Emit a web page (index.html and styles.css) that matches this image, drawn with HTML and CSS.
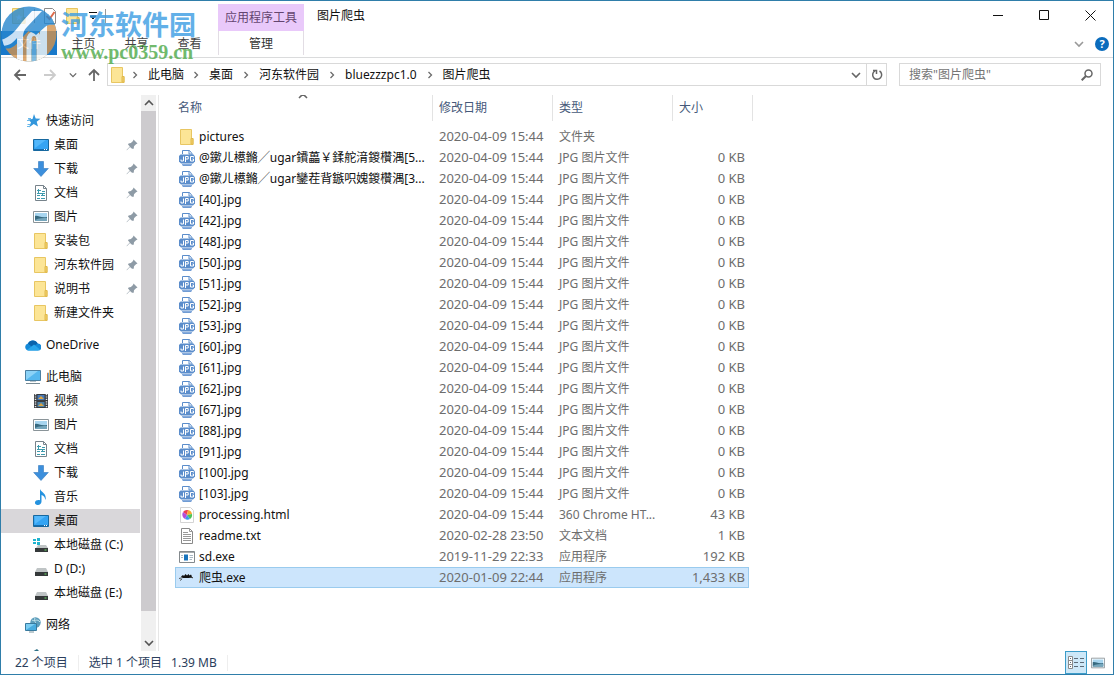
FILE: index.html
```html
<!DOCTYPE html>
<html lang="zh-CN">
<head>
<meta charset="utf-8">
<title>图片爬虫</title>
<link rel="stylesheet" href="styles.css">
</head>
<body>
<svg class="defs" aria-hidden="true">
  <symbol id="folder" viewBox="0 0 16 16"><path d="M1.500 .5h11v9h1.500v6h-12.500z" fill="#fce596" stroke="#e8c662"/><path d="M12 15V9.500h2v6z" fill="#f3d06a" stroke="#e0b94c"/></symbol>
  <symbol id="star" viewBox="0 0 16 16"><path d="M9 1l1.700 4.500 4.800.2-3.800 3 1.300 4.800L8.700 11 4 14.500l2-5.300-3-2.700 4.500-.6z" fill="#3296dc"/><path d="M2 7.500h3M3 5.500h3M2.500 11.500h3M2 13.500h3" stroke="#69b8ea"/></symbol>
  <symbol id="desktop" viewBox="0 0 16 16"><path d="M.5 2.500h15v11H.5z" fill="#35a4f3" stroke="#17689f"/><path d="M2 11l11-8H1.500z" fill="#54b8fb"/><path d="M1 12.500h14" stroke="#176bab"/><path d="M11 12.500h1M13 12.500h1" stroke="#fff"/></symbol>
  <symbol id="down" viewBox="0 0 16 16"><path d="M5.500.5h5v7h4.800L8 15.500.7 7.500h4.800z" fill="#3c8fdc" stroke="#3279bd" stroke-width=".6"/></symbol>
  <symbol id="doc" viewBox="0 0 16 16"><path d="M2.500.5h8l3 3v12h-11z" fill="#fff" stroke="#77838b"/><path d="M10.500.5v3h3" fill="none" stroke="#77838b"/><path d="M4 5.500h4M9 6.500h3M4 8.500h8M4 10.500h3M8 10.500h4M4 13.500h3M8 13.500h4M5.500 4v5M9.500 8v3" stroke="#3e9aad"/></symbol>
  <symbol id="photo" viewBox="0 0 16 16"><path d="M.5 2.500h15v11H.5z" fill="#fff" stroke="#8a9499"/><path d="M2 4h12v8H2z" fill="#a7d5ef"/><path d="M2 7c3-1 5 2 12 1v4H2z" fill="#376a80"/><path d="M2 11c4-2 8-2 12-2v3H2z" fill="#75a6bc"/></symbol>
  <symbol id="cloud" viewBox="0 0 16 16"><path d="M3.500 13.500a3.500 3.500 0 01-.6-6.900A5.500 5.500 0 0112.700 6.500a3.500 3.500 0 01.3 7z" fill="#1489d8"/><path d="M3 6.500a5.500 5.500 0 019.700 0L7 10z" fill="#0963ac"/><path d="M2 13l7-5.500 6 5-2 1H3.500z" fill="#28a6eb"/></symbol>
  <symbol id="pc" viewBox="0 0 16 16"><path d="M.5 1.500h15v10H.5z" fill="#55b7ee" stroke="#4a7fa1"/><path d="M1 11L13 2H1z" fill="#8bd2f7"/><path d="M1 14.500h14" stroke="#768993"/><path d="M5 12.500h6" stroke="#b9c5cb"/></symbol>
  <symbol id="film" viewBox="0 0 16 16"><path d="M1 1h14v14H1z" fill="#393c40"/><path d="M2.500 1v14M13.500 1v14" stroke="#e4e4e4" stroke-width="1.500" stroke-dasharray="1.200 1.200"/><path d="M4.500 2h7v5h-7z" fill="#4678b8"/><path d="M4.500 9h7v5h-7z" fill="#4f83a9"/><path d="M5 6l3-3 3 3zM5 13l3-3 3 3z" fill="#dba544"/></symbol>
  <symbol id="music" viewBox="0 0 16 16"><path d="M7 0c1 3.500 7 4 5.500 11-1-4-2.500-4.500-4-5V12.500c0 4.500-7 4.500-6.500 1 .3-2.300 3-2.800 5-2.200z" fill="#2492df"/></symbol>
  <symbol id="disk" viewBox="0 0 16 16"><path d="M4 7h9l2 4H2z" fill="#bfc4c5"/><path d="M2 11h13v4H2z" fill="#35393a"/><path d="M11.500 13h2" stroke="#6be267"/></symbol>
  <symbol id="cdisk" viewBox="0 0 16 16"><path d="M5 8h8l2 3H3z" fill="#bfc4c5"/><path d="M2 11h13v4H2z" fill="#35393a"/><path d="M11.500 13h2" stroke="#6be267"/><path d="M0 2h3v2H0zM4 1h3v3H4zM0 5h3v2H0zM4 5h3v3H4z" fill="#20b4cf"/></symbol>
  <symbol id="net" viewBox="0 0 16 16"><circle cx="10.500" cy="5.500" r="5.200" fill="#5c9dbb"/><path d="M7 3c2 2 5-2 8 2M10 1c-2 4 3 5 1 9" stroke="#c6e6ed" fill="none"/><path d="M.5 6.500h11v7H.5z" fill="#48acdf" stroke="#387a9e"/><path d="M1 13l9-6H1z" fill="#7bcdf2"/><path d="M4 15h5" stroke="#7a959f"/></symbol>
  <symbol id="panel" viewBox="0 0 16 16"><path d="M12 0l3 3v6H7V3z" fill="#2f7186"/></symbol>
  <symbol id="pin" viewBox="0 0 12 12"><path d="M7.500.5l4 4-1.500.7-2 2-.3 2.500L6 9.800 4 7.900.8 11.200l-.3-.3L3.800 7.500 2 5.600l.6-1.200 2.300-.3L7 2z" fill="#8e9ba6"/></symbol>
  <symbol id="jpg" viewBox="0 0 16 16"><path d="M3.500 4V.5h7l2.500 3V6" fill="#fff" stroke="#5b8dcb"/><path d="M10 .5v3.500h3M4 15.500h8" fill="none" stroke="#5b8dcb"/><path d="M1.500 4.500h13l1.500 2v5l-2 2H2l-2-2V6z" fill="#5b8dcb"/><path d="M3 14h10v1.500H3z" fill="#86abdc"/><path d="M4.500 6.500V11H2V9.500M6.500 12V6.500h2.700V9H6.500M14.500 7.500V6.500h-3V11h3V9h-1" fill="none" stroke="#fff"/></symbol>
  <symbol id="html" viewBox="0 0 16 16"><path d="M1.500.5h10l3 3v12h-13z" fill="#fff" stroke="#d4d4d4"/><path d="M8 8L4 5a5 5 0 015-2z" fill="#ed3d53"/><path d="M8 8L9 3a5 5 0 014 4z" fill="#f9a631"/><path d="M8 8l5-1a5 5 0 01-2 5z" fill="#4dc455"/><path d="M8 8l3 4a5 5 0 01-5 0z" fill="#3c9aeb"/><path d="M8 8l-2 4a5 5 0 01-2-7z" fill="#b24cd9"/></symbol>
  <symbol id="txt" viewBox="0 0 16 16"><path d="M2.500.5h8l3 3v12h-11z" fill="#fff" stroke="#898989"/><path d="M10.500.5v3h3M4 4.500h5M4 6.500h8M4 8.500h8M4 10.500h8M4 12.500h8" fill="none" stroke="#989898"/></symbol>
  <symbol id="exe" viewBox="0 0 16 16"><path d="M.5 2.500h15v11H.5z" fill="#fff" stroke="#83898d"/><path d="M1 3.500h14" stroke="#a6aaac"/><path d="M5 5.500h4v6H5z" fill="#1874bd"/><path d="M10.500 6.500H14M10.500 8.500H14M10.500 10.500H13M2 6.500h2M2 8.500h2" stroke="#a9b8c3"/></symbol>
  <symbol id="bug" viewBox="0 0 16 16"><path d="M2 6.500l2-1.500 1 1 1.500-2L8 5.500 9.500 4l1 1.500 1.500-1 1 2-2 1.500H4z" fill="#111"/><path d="M0 8.500l4-1M3 9l-2 1.500M10 7.500h4M12 7l1.500 1" stroke="#333" stroke-width=".8"/></symbol>
  <symbol id="chev" viewBox="0 0 10 10"><path d="M1 3l4 4 4-4" fill="none" stroke="currentColor" stroke-width="1.600"/></symbol>
  <symbol id="sep" viewBox="0 0 10 10"><path d="M3.500 2l3 3-3 3" fill="none" stroke="#6b6b6b" stroke-width="1.300"/></symbol>
  <symbol id="arrow" viewBox="0 0 14 14"><path d="M13 7H2M7 2L2 7l5 5" fill="none" stroke="currentColor" stroke-width="1.800"/></symbol>
</svg>

<div class="window">
  <header class="top">
    <div class="left-head">
      <div class="quick">
        <svg viewBox="0 0 16 16"><use href="#folder"/><path d="M8 6l1 2.500h2.500l-2 1.500.8 2.500L8 11l-2.300 1.500.8-2.500-2-1.500H7z" fill="#fff"/></svg>
        <i></i>
        <svg viewBox="0 0 16 16"><path d="M2.500.5h8l3 3v12h-11z" fill="#fff" stroke="#8a8a8a"/><path d="M4.500 8l3 3 5-7" fill="none" stroke="#dd6b4b" stroke-width="2"/></svg>
        <svg><use href="#folder"/></svg>
        <svg class="mini" viewBox="0 0 10 10"><path d="M1 1.500h8M2 5h6L5 8z" fill="#111" stroke="#111"/></svg>
        <i></i>
      </div>
      <nav class="tabs"><button class="file">文件</button><button>主页</button><button>共享</button><button>查看</button></nav>
    </div>
    <div class="context"><span>应用程序工具</span><button>管理</button></div>
    <h1 class="title">图片爬虫</h1>
    <div class="right-head">
      <div class="caption">
        <button aria-label="最小化"><svg viewBox="0 0 11 11"><path d="M0 5.500h10"/></svg></button>
        <button aria-label="最大化"><svg viewBox="0 0 11 11"><path d="M.5.5h9v9h-9z"/></svg></button>
        <button aria-label="关闭"><svg viewBox="0 0 11 11"><path d="M.5.5l10 10M10.500.5l-10 10"/></svg></button>
      </div>
      <div class="help"><button aria-label="展开功能区"><svg class="s10"><use href="#chev"/></svg></button><button class="q" aria-label="帮助">?</button></div>
    </div>
  </header>

  <div class="watermark"><svg viewBox="0 0 58 62"><defs><clipPath id="disc"><circle cx="28" cy="33" r="27.500"/></clipPath></defs><g clip-path="url(#disc)"><path d="M0 0h58v62H0z" fill="#2686ce"/><path d="M0 46c8 4 14 0 20-8l14-15c8-5 14-2 24-7v46H0z" fill="#d4934d"/><path d="M0 39c10-3 15-10 21-18l10-11h10L26 26c-3 3-4 6-4 12v24h-6V37C11 43 7 45 0 45z" fill="#f5faff"/><path d="M28 62V39c0-8 10-9 10 0v23" stroke="#f9f8f2" stroke-width="5" fill="none"/><path d="M33 62V40" stroke="#66add9" stroke-width="5"/><path d="M39 19h7v43h-7z" fill="#f8faf8"/><path d="M27 30l14-15c4-3 9-2 14-3v12c-5 0-7-1-11 2l-9 8c-3-3-6-3-8-4z" fill="#2387d0"/></g></svg><p><b>河东软件园</b><span>www.pc0359.cn</span></p></div>

  <div class="nav">
    <button aria-label="后退"><svg class="s14"><use href="#arrow"/></svg></button>
    <button class="faint fwd" aria-label="前进"><svg class="s14"><use href="#arrow"/></svg></button>
    <button class="hist" aria-label="最近位置"><svg class="s8"><use href="#chev"/></svg></button>
    <button class="up" aria-label="上移"><svg class="s14"><use href="#arrow"/></svg></button>
    <div class="address">
      <svg class="s16"><use href="#folder"/></svg>
      <svg class="s10"><use href="#sep"/></svg><a href="#">此电脑</a>
      <svg class="s10"><use href="#sep"/></svg><a href="#">桌面</a>
      <svg class="s10"><use href="#sep"/></svg><a href="#">河东软件园</a>
      <svg class="s10"><use href="#sep"/></svg><a href="#">bluezzzpc1.0</a>
      <svg class="s10"><use href="#sep"/></svg><a href="#">图片爬虫</a>
      <button class="drop" aria-label="历史"><svg class="s10"><use href="#chev"/></svg></button>
      <button class="refresh" aria-label="刷新"><svg class="s12" viewBox="0 0 12 12"><path d="M8.500 2A4.500 4.500 0 114 1.900" fill="none" stroke="#666" stroke-width="1.500"/><path d="M2 1.500h3.500V5" fill="none" stroke="#666" stroke-width="1.500"/></svg></button>
    </div>
    <label class="search"><input type="text" placeholder='搜索"图片爬虫"' aria-label="搜索"><svg class="s12" viewBox="0 0 12 12"><circle cx="7.500" cy="4.500" r="3.500" fill="none" stroke="#666" stroke-width="1.500"/><path d="M5 7L.7 11.300" stroke="#666" stroke-width="2"/></svg></label>
  </div>

  <main class="body">
    <aside class="side">
      <ul>
        <li class="root"><svg><use href="#star"/></svg>快速访问</li>
        <li><svg><use href="#desktop"/></svg>桌面<svg class="pin"><use href="#pin"/></svg></li>
        <li><svg><use href="#down"/></svg>下载<svg class="pin"><use href="#pin"/></svg></li>
        <li><svg><use href="#doc"/></svg>文档<svg class="pin"><use href="#pin"/></svg></li>
        <li><svg><use href="#photo"/></svg>图片<svg class="pin"><use href="#pin"/></svg></li>
        <li><svg><use href="#folder"/></svg>安装包<svg class="pin"><use href="#pin"/></svg></li>
        <li><svg><use href="#folder"/></svg>河东软件园<svg class="pin"><use href="#pin"/></svg></li>
        <li><svg><use href="#folder"/></svg>说明书<svg class="pin"><use href="#pin"/></svg></li>
        <li><svg><use href="#folder"/></svg>新建文件夹</li>
      </ul>
      <ul><li class="root"><svg><use href="#cloud"/></svg>OneDrive</li></ul>
      <ul>
        <li class="root"><svg><use href="#pc"/></svg>此电脑</li>
        <li><svg><use href="#film"/></svg>视频</li>
        <li><svg><use href="#photo"/></svg>图片</li>
        <li><svg><use href="#doc"/></svg>文档</li>
        <li><svg><use href="#down"/></svg>下载</li>
        <li><svg><use href="#music"/></svg>音乐</li>
        <li class="current"><svg><use href="#desktop"/></svg>桌面</li>
        <li><svg><use href="#cdisk"/></svg>本地磁盘 (C:)</li>
        <li><svg><use href="#disk"/></svg>D (D:)</li>
        <li><svg><use href="#disk"/></svg>本地磁盘 (E:)</li>
      </ul>
      <ul><li class="root"><svg><use href="#net"/></svg>网络</li></ul>
      <ul><li class="root"><svg><use href="#panel"/></svg></li></ul>
    </aside>
    <div class="scroll">
      <button class="flip" aria-label="向上滚动"><svg class="s10"><use href="#chev"/></svg></button>
      <div class="thumb"></div><div class="track"></div>
      <button aria-label="向下滚动"><svg class="s10"><use href="#chev"/></svg></button>
    </div>
    <section class="files">
      <svg class="sort s10 flip"><use href="#chev"/></svg>
      <table>
        <colgroup><col class="c1"><col class="c2"><col class="c2"><col class="c4"></colgroup>
        <thead><tr><th><span>名称</span></th><th><span>修改日期</span></th><th><span>类型</span></th><th><span>大小</span></th></tr></thead>
        <tbody>
        <tr><td><div><svg><use href="#folder"/></svg>pictures</div></td><td>2020-04-09 15:44</td><td>文件夹</td><td></td></tr>
        <tr><td><div><svg><use href="#jpg"/></svg>@鏉ㄦ櫒鏅╱ugar鐨藟￥鍒舵湇鍐欑湡[5...</div></td><td>2020-04-09 15:44</td><td>JPG 图片文件</td><td>0 KB</td></tr>
        <tr><td><div><svg><use href="#jpg"/></svg>@鏉ㄦ櫒鏅╱ugar鑾茬背鏃呮媿鍐欑湡[3...</div></td><td>2020-04-09 15:44</td><td>JPG 图片文件</td><td>0 KB</td></tr>
        <tr><td><div><svg><use href="#jpg"/></svg>[40].jpg</div></td><td>2020-04-09 15:44</td><td>JPG 图片文件</td><td>0 KB</td></tr>
        <tr><td><div><svg><use href="#jpg"/></svg>[42].jpg</div></td><td>2020-04-09 15:44</td><td>JPG 图片文件</td><td>0 KB</td></tr>
        <tr><td><div><svg><use href="#jpg"/></svg>[48].jpg</div></td><td>2020-04-09 15:44</td><td>JPG 图片文件</td><td>0 KB</td></tr>
        <tr><td><div><svg><use href="#jpg"/></svg>[50].jpg</div></td><td>2020-04-09 15:44</td><td>JPG 图片文件</td><td>0 KB</td></tr>
        <tr><td><div><svg><use href="#jpg"/></svg>[51].jpg</div></td><td>2020-04-09 15:44</td><td>JPG 图片文件</td><td>0 KB</td></tr>
        <tr><td><div><svg><use href="#jpg"/></svg>[52].jpg</div></td><td>2020-04-09 15:44</td><td>JPG 图片文件</td><td>0 KB</td></tr>
        <tr><td><div><svg><use href="#jpg"/></svg>[53].jpg</div></td><td>2020-04-09 15:44</td><td>JPG 图片文件</td><td>0 KB</td></tr>
        <tr><td><div><svg><use href="#jpg"/></svg>[60].jpg</div></td><td>2020-04-09 15:44</td><td>JPG 图片文件</td><td>0 KB</td></tr>
        <tr><td><div><svg><use href="#jpg"/></svg>[61].jpg</div></td><td>2020-04-09 15:44</td><td>JPG 图片文件</td><td>0 KB</td></tr>
        <tr><td><div><svg><use href="#jpg"/></svg>[62].jpg</div></td><td>2020-04-09 15:44</td><td>JPG 图片文件</td><td>0 KB</td></tr>
        <tr><td><div><svg><use href="#jpg"/></svg>[67].jpg</div></td><td>2020-04-09 15:44</td><td>JPG 图片文件</td><td>0 KB</td></tr>
        <tr><td><div><svg><use href="#jpg"/></svg>[88].jpg</div></td><td>2020-04-09 15:44</td><td>JPG 图片文件</td><td>0 KB</td></tr>
        <tr><td><div><svg><use href="#jpg"/></svg>[91].jpg</div></td><td>2020-04-09 15:44</td><td>JPG 图片文件</td><td>0 KB</td></tr>
        <tr><td><div><svg><use href="#jpg"/></svg>[100].jpg</div></td><td>2020-04-09 15:44</td><td>JPG 图片文件</td><td>0 KB</td></tr>
        <tr><td><div><svg><use href="#jpg"/></svg>[103].jpg</div></td><td>2020-04-09 15:44</td><td>JPG 图片文件</td><td>0 KB</td></tr>
        <tr><td><div><svg><use href="#html"/></svg>processing.html</div></td><td>2020-04-09 15:44</td><td>360 Chrome HT...</td><td>43 KB</td></tr>
        <tr><td><div><svg><use href="#txt"/></svg>readme.txt</div></td><td>2020-02-28 23:50</td><td>文本文档</td><td>1 KB</td></tr>
        <tr><td><div><svg><use href="#exe"/></svg>sd.exe</div></td><td>2019-11-29 22:33</td><td>应用程序</td><td>192 KB</td></tr>
        <tr class="selected"><td><div><svg><use href="#bug"/></svg>爬虫.exe</div></td><td>2020-01-09 22:44</td><td>应用程序</td><td>1,433 KB</td></tr>
        </tbody>
      </table>
    </section>
  </main>

  <footer class="status">
    <span>22 个项目</span><span>选中 1 个项目&ensp; 1.39 MB</span>
    <div class="views">
      <button class="on" aria-label="详细信息"><svg viewBox="0 0 16 14"><path d="M.5.5h4v12h-4zM.5 4.500h4M.5 8.500h4" fill="#fff" stroke="#8b8b8b"/><path d="M2 2.500h1M2 6.500h1M2 10.500h1M6 2.500h4M12 2.500h4M6 6.500h4M12 6.500h4M6 10.500h4M12 10.500h4" stroke="#5d6b78"/></svg></button>
      <button aria-label="大图标"><svg><use href="#photo"/></svg></button>
    </div>
  </footer>
</div>
</body>
</html>
```

FILE: styles.css
```css
* { box-sizing: border-box; }
body { margin: 0; background: #fff; color: #111; font: 12px/16px "Noto Sans", "Noto Sans CJK SC", sans-serif; }
button { border: 0; padding: 0; background: none; font: inherit; color: inherit; display: flex; align-items: center; justify-content: center; }
a { color: inherit; text-decoration: none; }
ul { list-style: none; margin: 0; padding: 0; }
svg { width: 16px; height: 16px; flex: none; display: block; }
.defs { position: absolute; width: 0; height: 0; }
.s8 { width: 8px; height: 8px; }
.s10 { width: 10px; height: 10px; }
.s12 { width: 12px; height: 12px; }
.s14 { width: 14px; height: 14px; }
.flip svg, svg.flip { transform: rotate(180deg); }

.window { position: relative; min-height: 100vh; display: flex; flex-direction: column; border: 1px solid #2f7eaa; }

.top { display: flex; height: 57px; border-bottom: 1px solid #dadbdc; }
.left-head { width: 217px; display: flex; flex-direction: column; }
.quick { height: 30px; display: flex; align-items: center; gap: 7px; padding-left: 10px; }
.quick i { width: 1px; height: 14px; background: #999; }
.quick .mini { width: 10px; height: 10px; }
.tabs { display: flex; height: 24px; }
.tabs button { width: 53px; padding-top: 1px; color: #444; }
.tabs .file { width: 56px; background: #1979ca; color: #fff; }
.context { width: 86px; padding-top: 3px; text-align: center; color: #63456f; }
.context span { display: block; line-height: 27px; background: #e9c9fa; }
.context button { width: 100%; height: 24px; padding-top: 1px; color: #333; border: solid #e2dde4; border-width: 0 1px; }
.title { margin: 0 0 0 13px; font-size: 12px; font-weight: 400; line-height: 30px; }
.right-head { margin-left: auto; }
.caption { display: flex; height: 28px; }
.caption button { width: 46px; }
.caption button:first-child { width: 45px; }
.caption svg { width: 11px; height: 11px; fill: none; stroke: #111; }
.help { display: flex; justify-content: flex-end; align-items: center; gap: 11px; height: 30px; padding-right: 4px; color: #999; }
.help .q { width: 14px; height: 14px; border-radius: 50%; background: #0b6cbd; color: #fff; font-weight: 700; font-size: 11px; }

.watermark { position: absolute; left: 0; top: 0; display: flex; opacity: .8; pointer-events: none; }
.watermark svg { width: 58px; height: 62px; }
.watermark p { margin: 8px 0 0 2px; }
.watermark b, .watermark span { display: block; }
.watermark b { font-size: 27px; line-height: 32px; color: #3c9de3; }
.watermark span { font: bold 20px/22px "Liberation Serif", serif; color: #4eaa49; }

.nav { display: flex; height: 37px; padding: 5px 12px 9px 12px; color: #666; }
.nav > button { width: 14px; }
.nav .fwd { margin-left: 16px; }
.nav .fwd svg { transform: scaleX(-1); }
.nav .faint { color: #ccc; }
.nav .hist { width: 8px; margin-left: 12px; }
.nav .up { margin-left: 10px; }
.nav .up svg { transform: rotate(90deg); }
.address { flex: 1; min-width: 0; margin: 0 12px 0 6px; display: flex; align-items: center; border: 1px solid #d9d9d9; padding-left: 2px; color: #111; }
.address .s16 + .s10 { margin-left: 4px; }
.address a { margin: 0 8px; white-space: nowrap; }
.address a:first-of-type { margin-right: 7px; }
.drop { width: 20px; margin-left: auto; color: #666; }
.refresh { width: 20px; align-self: stretch; border-left: 1px solid #d9d9d9; }
.search { width: 202px; display: flex; align-items: center; border: 1px solid #d9d9d9; padding: 0 7px 0 9px; }
.search input { flex: 1; min-width: 0; border: 0; padding: 0; outline: 0; font: inherit; background: none; }
.search input::placeholder { color: #757575; opacity: 1; }

.body { flex: 1 1 0; min-height: 0; display: flex; overflow: hidden; }
.side { width: 140px; padding-top: 14px; overflow: hidden; }
.side ul { margin-bottom: 8px; }
.side li { height: 24px; margin-right: 1px; display: flex; align-items: center; gap: 5px; padding: 0 2px 0 32px; white-space: nowrap; }
.side .root { padding-left: 24px; }
.side .pin { width: 12px; height: 12px; margin: 0 0 0 auto; }
.side .current { background: #d9d7da; }
.scroll { width: 18px; border-right: 1px solid #e6e6e6; padding-right: 2px; display: flex; flex-direction: column; }
.scroll button { height: 16px; background: #f0f0f0; color: #555; }
.thumb { flex: 1; background: #cdcbce; }
.track { height: 24px; background: #f0f0f0; }

.files { flex: 1; position: relative; padding-left: 16px; }
.sort { position: absolute; left: 139px; top: -4px; color: #666; }
table { table-layout: fixed; width: 574px; border-collapse: separate; border-spacing: 0; }
.c1 { width: 258px; }
.c2 { width: 120px; }
th { padding: 0 0 5px; font-weight: 400; text-align: left; color: #46597a; }
th span { display: flex; align-items: center; height: 26px; padding-left: 6px; border-right: 1px solid #e3e3e3; }
th:first-child span { padding-left: 3px; }
th:last-child span { width: 80px; }
td { height: 21px; padding: 0 0 0 6px; border: 1px solid transparent; border-width: 1px 0; line-height: 17px; color: #6d6d6d; white-space: nowrap; }
td:first-child { border-left-width: 1px; padding-left: 3px; color: #111; }
td:last-child { border-right-width: 1px; padding-right: 3px; text-align: right; font-size: 13px; }
td:nth-child(2) { font-size: 13px; }
td div { display: flex; align-items: center; gap: 4px; overflow: hidden; }
.selected td { background: #cce5fc; border-color: #9acbee; }

.status { height: 23px; display: flex; align-items: center; color: #2b3e5c; }
.status > span { padding: 0 10px 0 14px; border-right: 1px solid #eee; }
.status > span + span { padding: 0 10px; }
.views { display: flex; margin-left: auto; padding-right: 4px; align-self: stretch; }
.views button { width: 22px; }
.views svg { width: 14px; }
.views .on { background: #cde8f8; border: 1px solid #3c9cc9; }
.views .on svg { width: 16px; height: 14px; }
```
